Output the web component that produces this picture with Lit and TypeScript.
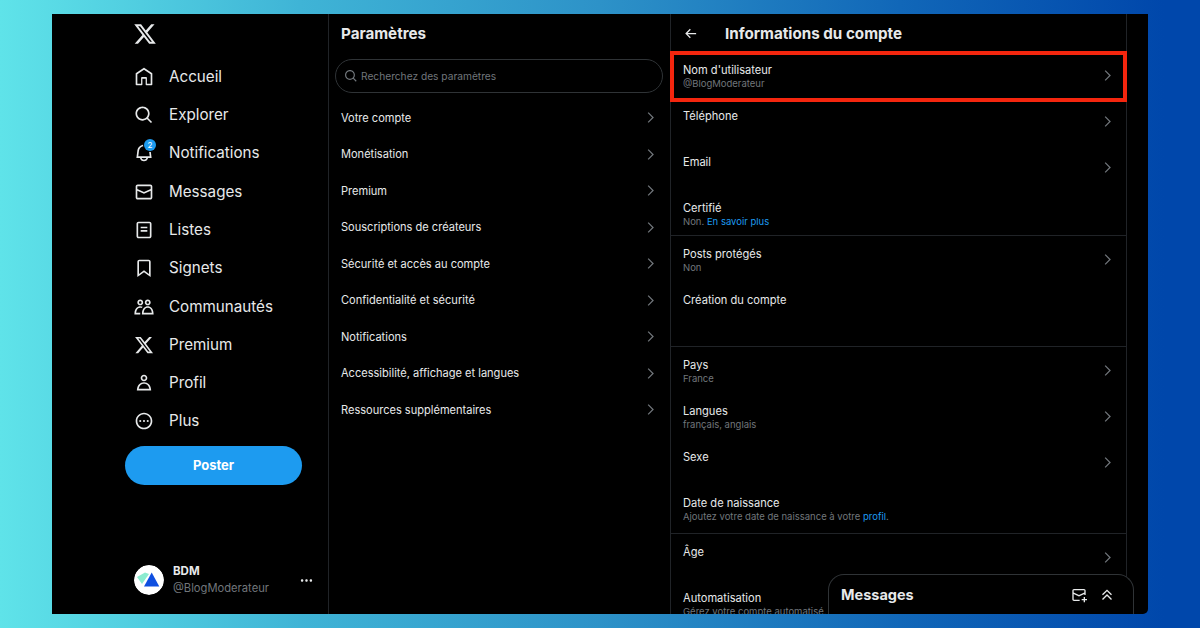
import { LitElement, html, css, svg } from "lit";
import { customElement } from "lit/decorators.js";

const P: Record<string, string> = {
  x: "M18.244 2.25h3.308l-7.227 8.26 8.502 11.24H16.17l-5.214-6.817L4.99 21.75H1.68l7.73-8.835L1.254 2.25H8.08l4.713 6.231zm-1.161 17.52h1.833L7.084 4.126H5.117z",
  home: "M21.591 7.146L12.52 1.157c-.316-.21-.724-.21-1.04 0l-9.071 5.99c-.26.173-.409.456-.409.757v13.183c0 .502.418.913.929.913H9.14c.51 0 .929-.41.929-.913v-7.075h3.909v7.075c0 .502.417.913.928.913h6.165c.511 0 .929-.41.929-.913V7.904c0-.301-.158-.584-.408-.758zM20 20l-4.5.01.011-7.097c0-.502-.418-.913-.928-.913H9.44c-.511 0-.929.41-.929.913L8.5 20H4V8.773l8.011-5.342L20 8.764z",
  search: "M10.25 3.75c-3.59 0-6.5 2.91-6.5 6.5s2.91 6.5 6.5 6.5c1.795 0 3.419-.726 4.596-1.904 1.178-1.177 1.904-2.801 1.904-4.596 0-3.59-2.91-6.5-6.5-6.5zm-8.5 6.5c0-4.694 3.806-8.5 8.5-8.5s8.5 3.806 8.5 8.5c0 1.986-.682 3.815-1.824 5.262l4.781 4.781-1.414 1.414-4.781-4.781c-1.447 1.142-3.276 1.824-5.262 1.824-4.694 0-8.5-3.806-8.5-8.5z",
  bell: "M19.993 9.042C19.48 5.017 16.054 2 11.996 2s-7.49 3.021-7.999 7.051L2.866 18H7.1c.463 2.282 2.481 4 4.9 4s4.437-1.718 4.9-4h4.236l-1.143-8.958zM12 20c-1.306 0-2.417-.835-2.829-2h5.658c-.412 1.165-1.523 2-2.829 2zm-6.866-4l.847-6.698C6.364 6.272 8.941 4 11.996 4s5.627 2.268 6.013 5.295L18.864 16H5.134z",
  mail: "M1.998 5.5c0-1.381 1.119-2.5 2.5-2.5h15c1.381 0 2.5 1.119 2.5 2.5v13c0 1.381-1.119 2.5-2.5 2.5h-15c-1.381 0-2.5-1.119-2.5-2.5v-13zm2.5-.5c-.276 0-.5.224-.5.5v2.764l8 3.638 8-3.636V5.5c0-.276-.224-.5-.5-.5h-15zm15.5 5.463l-8 3.636-8-3.638V18.5c0 .276.224.5.5.5h15c.276 0 .5-.224.5-.5v-8.037z",
  list: "M3 4.5C3 3.12 4.12 2 5.5 2h13C19.88 2 21 3.12 21 4.5v15c0 1.38-1.12 2.5-2.5 2.5h-13C4.12 22 3 20.88 3 19.5v-15zM5.5 4c-.28 0-.5.22-.5.5v15c0 .28.22.5.5.5h13c.28 0 .5-.22.5-.5v-15c0-.28-.22-.5-.5-.5h-13zM16 10H8V8h8v2zm-8 2h8v2H8v-2z",
  bookmark: "M4 4.5C4 3.12 5.119 2 6.5 2h11C18.881 2 20 3.12 20 4.5v18.44l-8-5.71-8 5.71V4.5zM6.5 4c-.276 0-.5.22-.5.5v14.56l6-4.29 6 4.29V4.5c0-.28-.224-.5-.5-.5h-11z",
  people: "M7.501 19.917L7.471 21H.472l.029-1.027c.184-6.618 3.736-8.977 7-8.977.963 0 1.95.212 2.87.672-.444.478-.851 1.03-1.212 1.656-.507-.204-1.054-.329-1.658-.329-2.767 0-4.57 2.223-4.938 6.004H7.56c-.023.302-.05.599-.059.918zm15.998.056L23.528 21H9.472l.029-1.027c.184-6.618 3.736-8.977 7-8.977s6.816 2.358 7 8.977zM21.437 19c-.367-3.781-2.17-6.004-4.938-6.004s-4.57 2.223-4.938 6.004h9.875zm-4.938-9c-.799 0-1.527-.279-2.116-.73-.836-.64-1.384-1.638-1.384-2.77 0-1.93 1.567-3.5 3.5-3.5s3.5 1.57 3.5 3.5c0 1.132-.548 2.13-1.384 2.77-.589.451-1.317.73-2.116.73zm-1.5-3.5c0 .827.673 1.5 1.5 1.5s1.5-.673 1.5-1.5-.673-1.5-1.5-1.5-1.5.673-1.5 1.5zM7.5 3C9.433 3 11 4.57 11 6.5S9.433 10 7.5 10 4 8.43 4 6.5 5.567 3 7.5 3zm0 2C6.673 5 6 5.673 6 6.5S6.673 8 7.5 8 9 7.327 9 6.5 8.327 5 7.5 5z",
  profile: "M5.651 19h12.698c-.337-1.8-1.023-3.21-1.945-4.19C15.318 13.65 13.838 13 12 13s-3.317.65-4.404 1.81c-.922.98-1.608 2.39-1.945 4.19zm.486-5.56C7.627 11.85 9.648 11 12 11s4.373.85 5.863 2.44c1.477 1.58 2.366 3.8 2.632 6.46l.11 1.1H3.395l.11-1.1c.266-2.66 1.155-4.88 2.632-6.46zM12 4c-1.105 0-2 .9-2 2s.895 2 2 2 2-.9 2-2-.895-2-2-2zM8 6c0-2.21 1.791-4 4-4s4 1.79 4 4-1.791 4-4 4-4-1.79-4-4z",
  more: "M2 12C2 6.48 6.48 2 12 2s10 4.48 10 10-4.48 10-10 10S2 17.52 2 12zm10-8c-4.42 0-8 3.58-8 8s3.58 8 8 8 8-3.58 8-8-3.58-8-8-8zM7.5 10.75a1.25 1.25 0 1 1 0 2.5 1.25 1.25 0 0 1 0-2.5zm4.5 0a1.25 1.25 0 1 1 0 2.5 1.25 1.25 0 0 1 0-2.5zm4.5 0a1.25 1.25 0 1 1 0 2.5 1.25 1.25 0 0 1 0-2.5z",
  chevron: "M14.586 12L7.543 4.96l1.414-1.42L17.414 12l-8.457 8.46-1.414-1.42L14.586 12z",
  back: "M7.414 13l5.043 5.04-1.414 1.42L3.586 12l7.457-7.46 1.414 1.42L7.414 11H21v2H7.414z",
  dots: "M3 12c0-1.1.9-2 2-2s2 .9 2 2-.9 2-2 2-2-.9-2-2zm9 2c1.1 0 2-.9 2-2s-.9-2-2-2-2 .9-2 2 .9 2 2 2zm7 0c1.1 0 2-.9 2-2s-.9-2-2-2-2 .9-2 2 .9 2 2 2z",
  compose: "M1.998 5.5c0-1.381 1.119-2.5 2.5-2.5h15c1.381 0 2.5 1.119 2.5 2.5V12h-2v-1.537l-8 3.635-8-3.635V18.5c0 .276.224.5.5.5H13v2H4.498c-1.381 0-2.5-1.119-2.5-2.5v-13zm2 2.766l8 3.635 8-3.635V5.5c0-.276-.224-.5-.5-.5h-15c-.276 0-.5.224-.5.5v2.766zM19 18v-3h2v3h3v2h-3v3h-2v-3h-3v-2h3z",
  collapse: "M12 3.59l7.457 7.45-1.414 1.42L12 6.41l-6.043 6.05-1.414-1.42L12 3.59zm0 7l7.457 7.45-1.414 1.42L12 13.41l-6.043 6.05-1.414-1.42L12 10.59z",
};

const icon = (name: string, cls = "") =>
  html`<svg class="ic ${cls}" viewBox="0 0 24 24">${svg`<path d=${P[name]}></path>`}</svg>`;

const NAV = [
  ["home", "Accueil"], ["search", "Explorer"], ["bell", "Notifications"], ["mail", "Messages"], ["list", "Listes"],
  ["bookmark", "Signets"], ["people", "Communautés"], ["x", "Premium"], ["profile", "Profil"], ["more", "Plus"],
];

const SETTINGS = [
  "Votre compte", "Monétisation", "Premium", "Souscriptions de créateurs", "Sécurité et accès au compte",
  "Confidentialité et sécurité", "Notifications", "Accessibilité, affichage et langues", "Ressources supplémentaires",
];

type Row = { t: string; s?: unknown; h: number; c?: boolean; b?: boolean };
const ROWS: Row[] = [
  { t: "Nom d'utilisateur", s: "@BlogModerateur", h: 46, c: true },
  { t: "Téléphone", h: 46, c: true },
  { t: "Email", h: 45.5, c: true },
  { t: "Certifié", s: html`Non. <a>En savoir plus</a>`, h: 46.5, b: true },
  { t: "Posts protégés", s: "Non", h: 45.5, c: true },
  { t: "Création du compte", h: 65.5, b: true },
  { t: "Pays", s: "France", h: 46, c: true },
  { t: "Langues", s: "français, anglais", h: 45.5, c: true },
  { t: "Sexe", h: 46, c: true },
  { t: "Date de naissance", s: html`Ajoutez votre date de naissance à votre <a>profil</a>.`, h: 49.5, b: true },
  { t: "Âge", h: 46, c: true },
  { t: "Automatisation", s: "Gérez votre compte automatisé.", h: 46 },
];

@customElement("app-root")
export class AppRoot extends LitElement {
  static styles = css`
    :host {
      display: block; width: 1200px; height: 628px; box-sizing: border-box; padding: 14px 52px; overflow: hidden;
      background: linear-gradient(90deg, #5fe3e9 0%, #3fb4d6 25%, #2d92c8 50%, #1167b8 75%, #0047ab 97%);
      font-family: Inter, "Noto Sans", sans-serif; color: #e7e9ea;
    }
    .window { position: relative; display: flex; height: 600px; background: #000; overflow: hidden; border-bottom-right-radius: 5px; }
    .ic { display: block; width: 20px; height: 20px; fill: currentColor; flex: none; }

    .side { width: 277px; flex: none; box-sizing: border-box; border-right: 1px solid #202327; padding: 8px 26px 0 73px; display: flex; flex-direction: column; }
    .logo { height: 24px; padding-bottom: 11.6px; margin-left: 8px; }
    .logo .ic { width: 24px; height: 24px; }
    .nav { display: flex; align-items: center; gap: 15px; height: 38.3px; padding-left: 9px; font-size: 15.2px; line-height: 20px; }
    .bell { position: relative; }
    .badge { position: absolute; top: -4px; right: -2px; width: 12px; height: 12px; border-radius: 50%; background: #1d9bf0; color: #fff; font-size: 8px; line-height: 12px; text-align: center; box-shadow: 0 0 0 1px #000; }
    .post { margin-top: 5.4px; height: 39px; line-height: 39px; border-radius: 20px; background: #1d9bf0; color: #fff; text-align: center; font-weight: 700; font-size: 13px; }
    .me { display: flex; align-items: center; margin-top: auto; margin-bottom: 17px; padding-left: 9px; margin-right: -12px; }
    .avatar { width: 30px; height: 30px; border-radius: 50%; flex: none; display: block; }
    .who { margin-left: 9px; flex: 1; font-size: 11.2px; line-height: 18px; }
    .who b { display: block; font-weight: 700; font-size: 11.5px; line-height: 16px; }
    .who span { color: #71767b; }
    .me .ic { width: 15px; height: 15px; }

    .mid { width: 342px; flex: none; box-sizing: border-box; border-right: 1px solid #202327; padding: 0 7px 0 6px; }
    .h { height: 39px; line-height: 39px; font-size: 15.2px; font-weight: 700; }
    .mid .h { padding-left: 6px; }
    .searchbox { margin-top: 6px; height: 34px; box-sizing: border-box; border: 1px solid #2f3336; border-radius: 17px; display: flex; align-items: center; gap: 3px; padding-left: 8px; color: #71767b; font-size: 10.2px; margin-bottom: 6.4px; }
    .searchbox .ic { width: 14px; height: 14px; }
    .set { display: flex; align-items: center; justify-content: space-between; height: 36.5px; padding: 0 5px 0 6px; font-size: 11.05px; }
    .chev { color: #71767b; width: 15px; height: 15px; }

    .right { width: 456px; flex: none; box-sizing: border-box; border-right: 1px solid #202327; overflow: hidden; }
    .head { display: flex; align-items: center; height: 38px; padding-left: 12px; font-size: 15.2px; font-weight: 700; }
    .head .ic { width: 15px; height: 15px; margin-right: 27px; }
    .row { box-sizing: border-box; padding: 11px 12px 0; position: relative; display: flex; justify-content: space-between; align-items: flex-start; }
    .row.line { border-bottom: 1px solid #202327; }
    .row .tt { font-size: 11.1px; line-height: 14px; }
    .row .ss { font-size: 9.5px; line-height: 12px; color: #71767b; margin-top: 1px; }
    .row a { color: #1d9bf0; }
    .row .chev { align-self: center; margin-top: -10px; margin-right: -1px; }

    .hl { position: absolute; left: 618px; top: 37px; width: 457px; height: 51px; box-sizing: border-box; border: 4px solid #f4260e; pointer-events: none; }
    .dock { position: absolute; left: 776px; top: 560px; width: 306px; height: 44px; box-sizing: border-box; background: #000; border: 1px solid #2f3336; border-bottom: none; border-radius: 16px 16px 0 0; display: flex; align-items: center; padding: 0 18px 4px 12px; }
    .dock b { flex: 1; font-size: 14.5px; font-weight: 700; }
    .dock .ic { width: 16px; height: 16px; margin-left: 12px; }
  `;

  render() {
    return html`<div class="window">
      <aside class="side">
        <div class="logo">${icon("x")}</div>
        ${NAV.map(([i, l]) => html`<div class="nav">
          ${i === "bell" ? html`<span class="bell">${icon(i)}<span class="badge">2</span></span>` : icon(i)}<span>${l}</span>
        </div>`)}
        <div class="post">Poster</div>
        <div class="me">
          <svg class="avatar" viewBox="0 0 30 30">
            <circle cx="15" cy="15" r="15" fill="#fff"></circle>
            <path d="M3 12l8-4.5 4 1.5-7 10z" fill="#8cecd0"></path>
            <path d="M17.7 7.5L25.3 21.5H10z" fill="#0f4fe0"></path>
          </svg>
          <div class="who"><b>BDM</b><span>@BlogModerateur</span></div>
          ${icon("dots")}
        </div>
      </aside>
      <section class="mid">
        <div class="h">Paramètres</div>
        <div class="searchbox">${icon("search")}<span>Recherchez des paramètres</span></div>
        ${SETTINGS.map((s) => html`<div class="set"><span>${s}</span>${icon("chevron", "chev")}</div>`)}
      </section>
      <section class="right">
        <div class="head">${icon("back")}<span>Informations du compte</span></div>
        ${ROWS.map((r) => html`<div class="row ${r.b ? "line" : ""}" style="height:${r.h}px">
          <div><div class="tt">${r.t}</div>${r.s ? html`<div class="ss">${r.s}</div>` : ""}</div>
          ${r.c ? icon("chevron", "chev") : ""}
        </div>`)}
      </section>
      <div class="hl"></div>
      <div class="dock"><b>Messages</b>${icon("compose")}${icon("collapse")}</div>
    </div>`;
  }
}
